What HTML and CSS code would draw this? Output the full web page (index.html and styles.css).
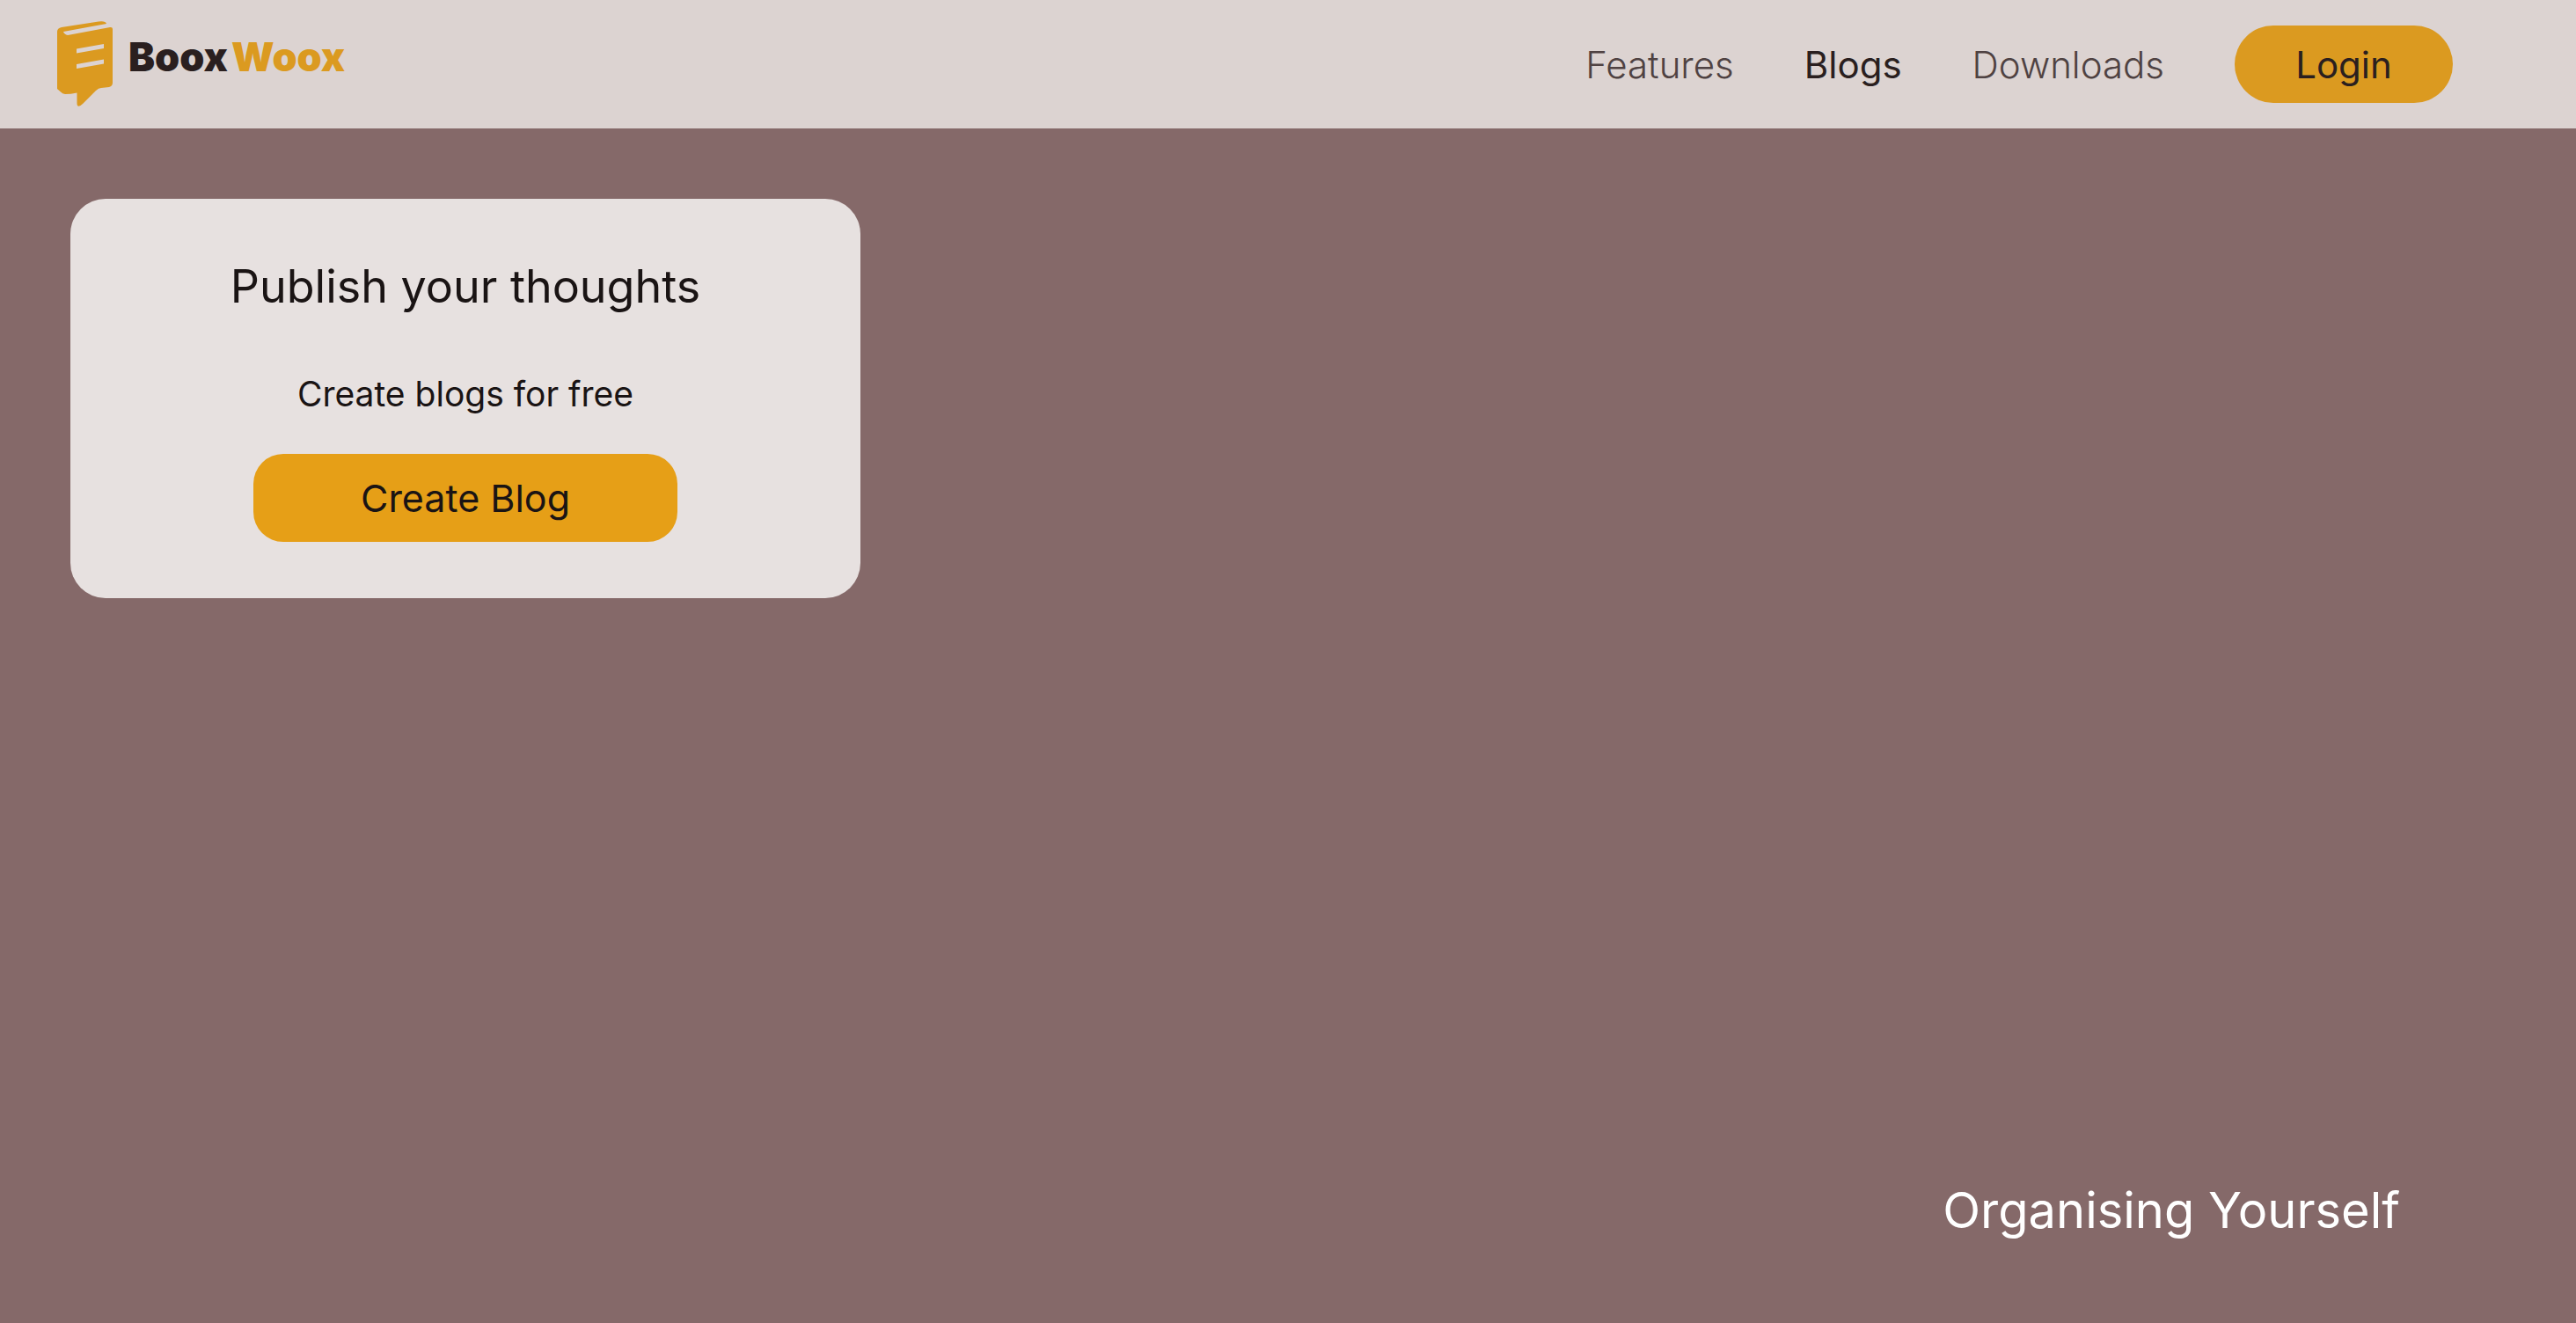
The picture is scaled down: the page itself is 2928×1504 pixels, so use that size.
FILE: index.html
```html
<!DOCTYPE html>
<html lang="en">
<head>
<meta charset="utf-8">
<title>BooxWoox – Blogs</title>
<meta name="viewport" content="width=device-width, initial-scale=1">
<link rel="stylesheet" href="styles.css">
</head>
<body>
<header class="header">
  <a class="brand" href="#">
    <svg class="brand-mark" viewBox="0 0 64 98" aria-hidden="true">
      <path fill="currentColor" fill-rule="evenodd" d="M1 12Q1 8 6 7L48 .5Q56 -.5 57 3L8 12Q9 15 13 16L61 7Q64 6.500 64 9V70Q64 74 60 75L51 76Q48 76 45 79L30 94Q26 98 24 96Q23.500 95 23.500 93V81.500Q16 83 10 83Q7 82.500 5 80.500L1 77ZM23 31.500L54 26V31L23 36.500ZM23 49L54 43.500V48.500L23 54Z"/>
    </svg>
    <span class="brand-name"><span>Boox</span><span class="brand-accent">Woox</span></span>
  </a>
  <nav class="nav">
    <a class="nav-link" href="#">Features</a>
    <a class="nav-link nav-link-active" href="#" aria-current="page">Blogs</a>
    <a class="nav-link" href="#">Downloads</a>
    <button class="button login" type="button">Login</button>
  </nav>
</header>
<main class="main">
  <section class="card">
    <h1 class="card-title">Publish your thoughts</h1>
    <p class="card-text">Create blogs for free</p>
    <button class="button create" type="button">Create Blog</button>
  </section>
  <h2 class="tagline">Organising Yourself</h2>
</main>
</body>
</html>
```

FILE: styles.css
```css
* {
  box-sizing: border-box;
}

body {
  margin: 0;
  min-height: 100vh;
  display: flex;
  flex-direction: column;
  background: #856969;
  color: #1a1414;
  font-family: Inter, "Liberation Sans", sans-serif;
  font-weight: 400;
}

.header {
  display: flex;
  justify-content: space-between;
  align-items: center;
  padding: 24px 140px 24px 64px;
  min-height: 146px;
  background: #dcd3d1;
  color: #2a1f1f;
}

.brand {
  display: flex;
  gap: 18px;
  color: #db9a20;
  text-decoration: none;
}

.brand-mark {
  width: 64px;
  height: 98px;
}

.brand-name {
  display: flex;
  gap: 4px;
  font-size: 45px;
  font-weight: 900;
  line-height: 82px;
  color: #2a1f1f;
}

.brand-accent {
  color: #db9a20;
}

.nav {
  display: flex;
  align-items: center;
  gap: 80px;
}

.nav-link {
  color: #4f4242;
  font-size: 42px;
  font-weight: 300;
  text-decoration: none;
}

.nav-link-active {
  color: #2a1f1f;
  font-weight: 400;
}

.button {
  padding: 0;
  border: 0;
  color: inherit;
  font: inherit;
  font-size: 42px;
  cursor: pointer;
}

.login {
  width: 248px;
  height: 88px;
  border-radius: 44px;
  background: #db9a20;
}

.main {
  flex: 1;
  display: flex;
  flex-direction: column;
  justify-content: space-between;
  align-items: flex-start;
  padding: 80px 80px 84px;
}

.card {
  display: flex;
  flex-direction: column;
  align-items: center;
  width: 898px;
  max-width: 100%;
  padding: 64px;
  border-radius: 40px;
  background: #e7e1e0;
}

.card-title {
  margin: 0 0 56px;
  font-size: 52px;
  font-weight: 400;
  line-height: 72px;
}

.card-text {
  margin: 0 0 38px;
  font-size: 39px;
  line-height: 60px;
}

.create {
  width: 482px;
  height: 100px;
  max-width: 100%;
  border-radius: 34px;
  background: #e69f17;
  font-size: 43px;
}

.tagline {
  align-self: flex-end;
  margin: 0 120px 0 0;
  color: #fff;
  font-size: 56px;
  font-weight: 400;
  line-height: 88px;
}
```
